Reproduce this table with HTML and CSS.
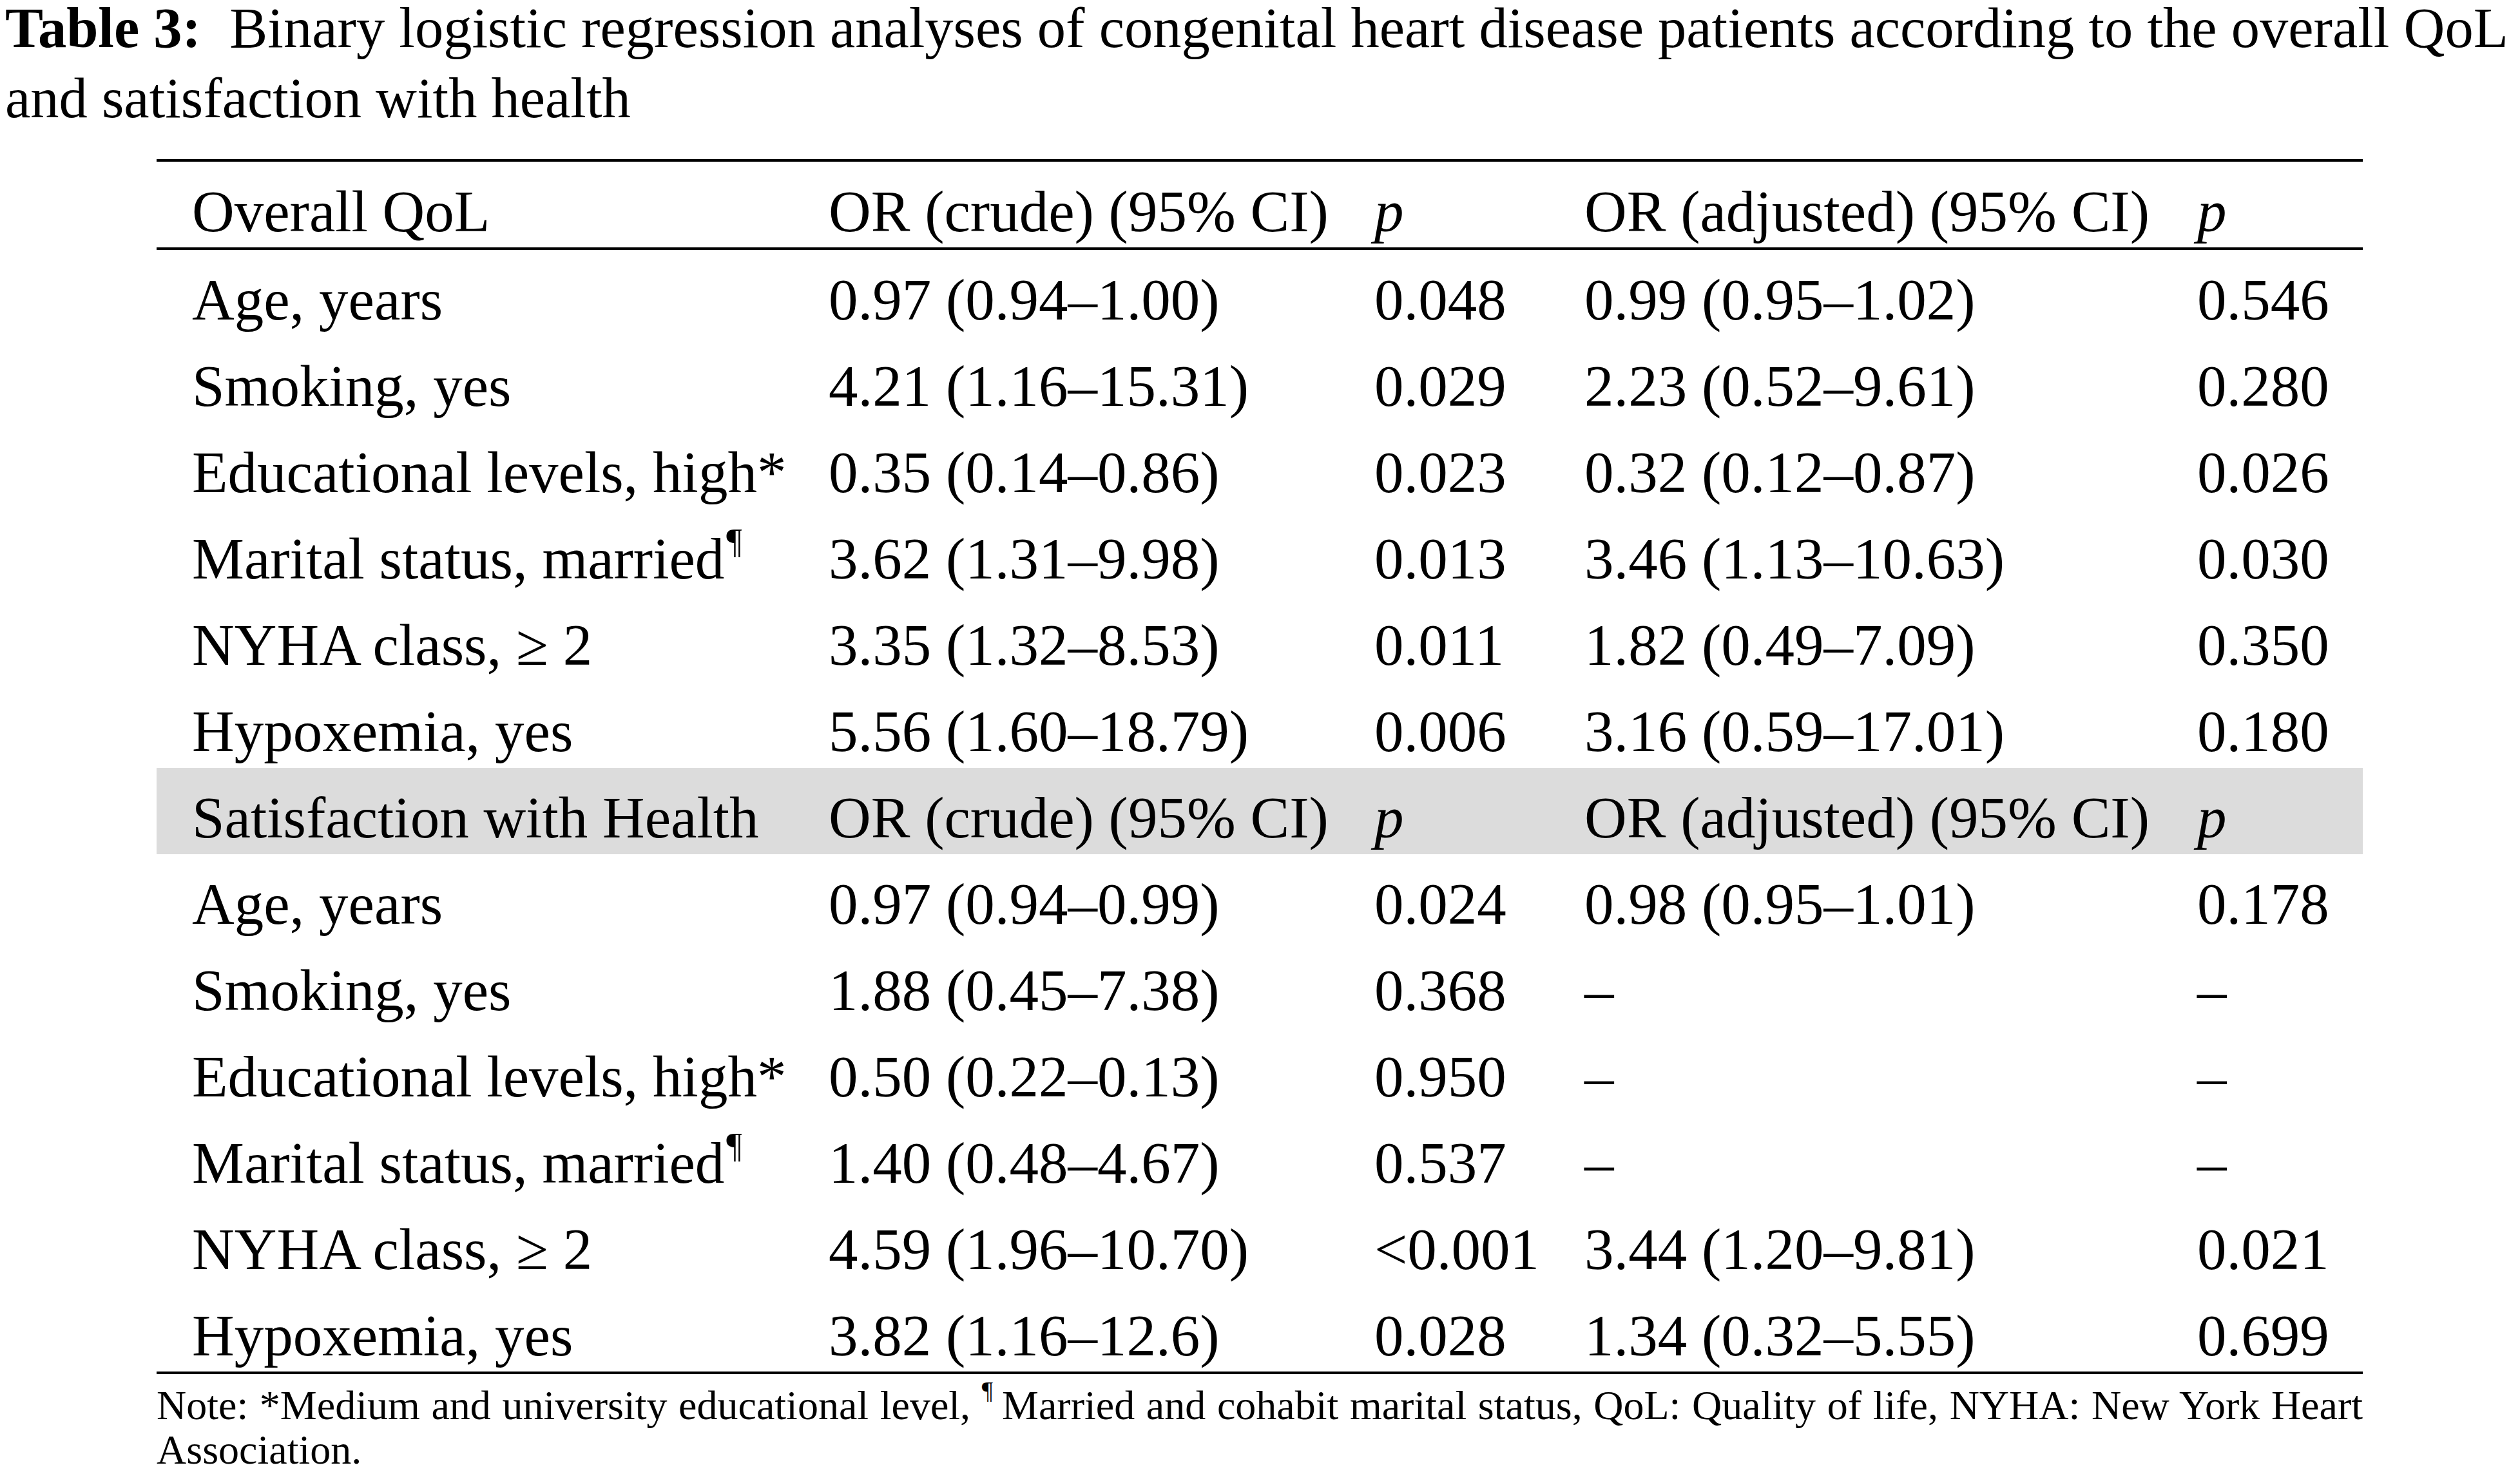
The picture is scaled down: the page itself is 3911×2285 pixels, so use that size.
FILE: index.html
```html
<!DOCTYPE html>
<html lang="en">
<head>
<meta charset="utf-8">
<title>Table 3</title>
<link rel="stylesheet" href="styles.css">
</head>
<body>
<div class="caption"><span class="label">Table 3:</span>&nbsp; Binary logistic regression analyses of congenital heart disease patients according to the overall QoL and satisfaction with health</div>
<div class="content">
  <div class="table">
    <div class="row head">
      <div class="c1">Overall QoL</div><div>OR (crude) (95% CI)</div><div><i>p</i></div><div>OR (adjusted) (95% CI)</div><div><i>p</i></div>
    </div>
    <div class="row">
      <div class="c1">Age, years</div><div>0.97 (0.94–1.00)</div><div>0.048</div><div>0.99 (0.95–1.02)</div><div>0.546</div>
    </div>
    <div class="row">
      <div class="c1">Smoking, yes</div><div>4.21 (1.16–15.31)</div><div>0.029</div><div>2.23 (0.52–9.61)</div><div>0.280</div>
    </div>
    <div class="row">
      <div class="c1">Educational levels, high*</div><div>0.35 (0.14–0.86)</div><div>0.023</div><div>0.32 (0.12–0.87)</div><div>0.026</div>
    </div>
    <div class="row">
      <div class="c1">Marital status, married<sup class="mark">¶</sup></div><div>3.62 (1.31–9.98)</div><div>0.013</div><div>3.46 (1.13–10.63)</div><div>0.030</div>
    </div>
    <div class="row">
      <div class="c1">NYHA class, ≥ 2</div><div>3.35 (1.32–8.53)</div><div>0.011</div><div>1.82 (0.49–7.09)</div><div>0.350</div>
    </div>
    <div class="row">
      <div class="c1">Hypoxemia, yes</div><div>5.56 (1.60–18.79)</div><div>0.006</div><div>3.16 (0.59–17.01)</div><div>0.180</div>
    </div>
    <div class="row section">
      <div class="c1">Satisfaction with Health</div><div>OR (crude) (95% CI)</div><div><i>p</i></div><div>OR (adjusted) (95% CI)</div><div><i>p</i></div>
    </div>
    <div class="row">
      <div class="c1">Age, years</div><div>0.97 (0.94–0.99)</div><div>0.024</div><div>0.98 (0.95–1.01)</div><div>0.178</div>
    </div>
    <div class="row">
      <div class="c1">Smoking, yes</div><div>1.88 (0.45–7.38)</div><div>0.368</div><div>–</div><div>–</div>
    </div>
    <div class="row">
      <div class="c1">Educational levels, high*</div><div>0.50 (0.22–0.13)</div><div>0.950</div><div>–</div><div>–</div>
    </div>
    <div class="row">
      <div class="c1">Marital status, married<sup class="mark">¶</sup></div><div>1.40 (0.48–4.67)</div><div>0.537</div><div>–</div><div>–</div>
    </div>
    <div class="row">
      <div class="c1">NYHA class, ≥ 2</div><div>4.59 (1.96–10.70)</div><div>&lt;0.001</div><div>3.44 (1.20–9.81)</div><div>0.021</div>
    </div>
    <div class="row last">
      <div class="c1">Hypoxemia, yes</div><div>3.82 (1.16–12.6)</div><div>0.028</div><div>1.34 (0.32–5.55)</div><div>0.699</div>
    </div>
  </div>
  <p class="note">Note: *Medium and university educational level, <sup class="nmark">¶</sup>Married and cohabit marital status, QoL: Quality of life, NYHA: New York Heart Association.</p>
</div>
</body>
</html>
```

FILE: styles.css
```css
html, body {
  margin: 0;
  padding: 0;
  background: #ffffff;
  color: #000000;
  font-family: "Liberation Serif", "Times New Roman", serif;
}

body {
  width: 3911px;
}

.caption {
  font-size: 88.5px;
  line-height: 109px;
  margin-top: -11px;
  padding: 0 0 0 8px;
}

.caption .label {
  font-weight: bold;
}

.content {
  margin: 40px 0 0 243px;
  width: 3424px;
}

.table {
  display: flex;
  flex-direction: column;
  border-top: 4px solid #000;
  border-bottom: 4px solid #000;
}

.row {
  display: grid;
  grid-template-columns: 1043px 847px 326px 951px 257px;
  font-size: 91px;
  line-height: 112px;
  padding-top: 22px;
  white-space: nowrap;
}

.row.head {
  line-height: 111px;
  border-bottom: 4px solid #000;
}

.row.section {
  background: #dcdcdc;
}

.row.last {
  line-height: 111px;
}

.c1 {
  padding-left: 55px;
}

.mark {
  font-size: 54px;
  vertical-align: 40px;
  line-height: 0;
  margin-left: 3px;
}

.note {
  margin: 14px 0 0 0;
  font-size: 64px;
  line-height: 69px;
  text-align: justify;
}

.nmark {
  font-size: 38px;
  vertical-align: 32px;
  line-height: 0;
  margin-right: 14px;
}
```
